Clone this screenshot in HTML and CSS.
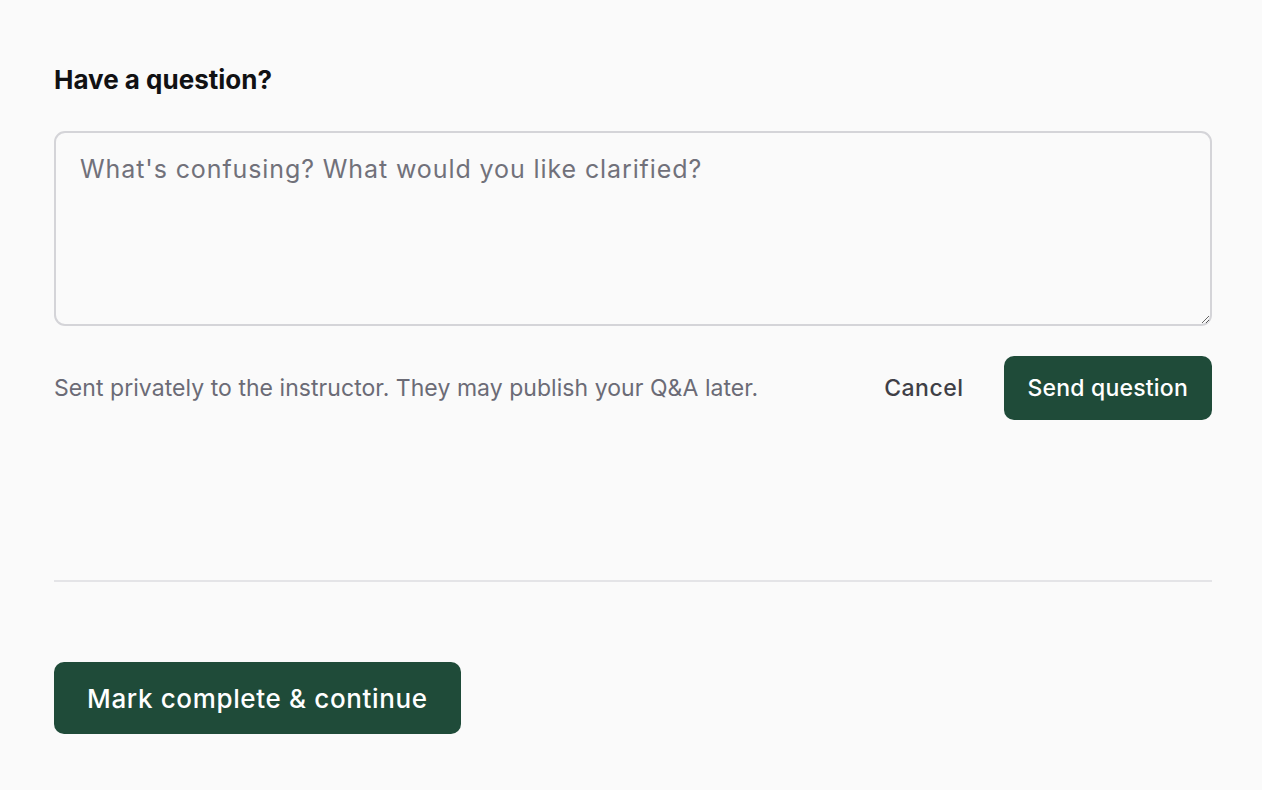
FILE: index.html
```html
<!DOCTYPE html>
<html lang="en">
<head>
<meta charset="utf-8">
<title>Have a question?</title>
<link rel="stylesheet" href="styles.css">
</head>
<body>
<main class="page">
  <section class="ask">
    <h2 class="ask-title">Have a question?</h2>
    <textarea class="ask-input" placeholder="What's confusing? What would you like clarified?"></textarea>
    <div class="ask-footer">
      <p class="ask-note">Sent privately to the instructor. They may publish your Q&amp;A later.</p>
      <div class="ask-actions">
        <button class="btn-link" type="button">Cancel</button>
        <button class="btn-primary" type="button">Send question</button>
      </div>
    </div>
  </section>
  <hr class="divider">
  <div class="complete">
    <button class="btn-primary btn-large" type="button">Mark complete &amp; continue</button>
  </div>
</main>
</body>
</html>
```
FILE: styles.css
```css
html, body {
  margin: 0;
  padding: 0;
  background: #fafafa;
}
body {
  font-family: Inter, "Liberation Sans", sans-serif;
  color: #18181b;
}
.page {
  padding: 64px 50px 40px 54px;
}
.ask {
  display: flex;
  flex-direction: column;
}
.ask-title {
  margin: 0;
  font-size: 26px;
  line-height: 32px;
  font-weight: 700;
  letter-spacing: 0;
  color: #111113;
}
.ask-input {
  margin-top: 35px;
  box-sizing: border-box;
  width: 100%;
  height: 195px;
  border: 2px solid #d4d4d8;
  border-radius: 11px;
  background: #fafafa;
  padding: 18px 24px;
  font-family: inherit;
  font-size: 25px;
  line-height: 36px;
  letter-spacing: 0.9px;
  color: #18181b;
  resize: vertical;
  outline: none;
}
.ask-input::placeholder {
  color: #71717a;
}
.ask-footer {
  margin-top: 30px;
  display: flex;
  align-items: center;
  justify-content: space-between;
}
.ask-note {
  margin: 0;
  font-size: 23px;
  line-height: 30px;
  letter-spacing: 0.05px;
  color: #6b6b76;
}
.ask-actions {
  display: flex;
  align-items: center;
  gap: 40px;
}
.btn-link {
  border: 0;
  background: none;
  padding: 0;
  font-family: inherit;
  font-size: 23px;
  letter-spacing: 0.5px;
  font-weight: 500;
  color: #3f3f46;
  cursor: pointer;
}
.btn-primary {
  border: 0;
  background: #1f4b39;
  color: #ffffff;
  font-family: inherit;
  font-size: 23px;
  letter-spacing: 0.2px;
  font-weight: 500;
  height: 64px;
  padding: 0 24px;
  border-radius: 10px;
  cursor: pointer;
}
.divider {
  margin: 160px 0 0 0;
  border: 0;
  border-top: 2px solid #e4e4e7;
}
.complete {
  margin-top: 80px;
}
.btn-large {
  height: 72px;
  font-size: 26px;
  letter-spacing: 0.65px;
  padding: 0 33px;
}
```
